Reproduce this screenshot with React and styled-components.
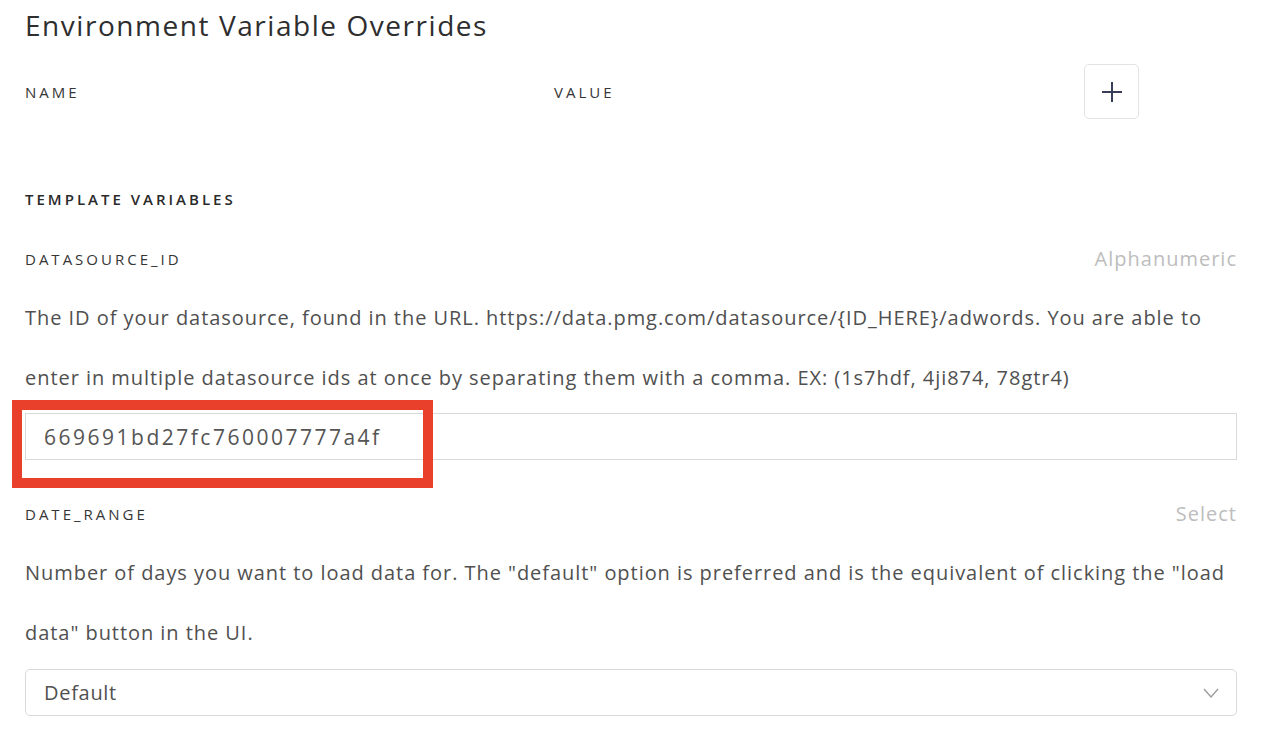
import React from "react";
import styled, { createGlobalStyle } from "styled-components";

const Global = createGlobalStyle`
  html, body { margin: 0; padding: 0; background: #fff; }
  body { font-family: "Open Sans", "Liberation Sans", sans-serif; color: #333; }
  * { box-sizing: border-box; }
`;

const Page = styled.div`
  width: 1264px;
  padding: 0 27px 0 25px;
  display: flex;
  flex-direction: column;
`;

const Title = styled.h1`
  margin: 0;
  font-size: 28px;
  font-weight: 400;
  line-height: 50px;
  color: #2e2e2e;
  letter-spacing: 1.55px;
`;

const HeaderRow = styled.div`
  margin-top: 14px;
  display: grid;
  grid-template-columns: 529px 530px 55px;
  align-items: center;
`;

const Label = styled.div`
  font-size: 15px;
  font-weight: ${(p) => (p.$strong ? 600 : 500)};
  letter-spacing: 3px;
  line-height: 30px;
  text-transform: uppercase;
  color: ${(p) => (p.$strong ? "#2a2a2a" : "#363636")};
  margin-top: ${(p) => p.$mt || 0}px;
`;

const AddButton = styled.button`
  width: 55px;
  height: 55px;
  border: 1px solid #e3e3e6;
  border-radius: 5px;
  background: #fff;
  display: flex;
  align-items: center;
  justify-content: center;
  padding: 0;
`;

const FieldHead = styled.div`
  margin-top: ${(p) => p.$mt}px;
  display: flex;
  justify-content: space-between;
  align-items: center;
  line-height: 30px;
`;

const TypeHint = styled.span`
  font-size: 20px;
  letter-spacing: 1px;
  color: #bdbdbd;
`;

const Description = styled.p`
  margin: 14px 0 0;
  font-size: 20px;
  letter-spacing: 0.95px;
  line-height: 60px;
  color: #505050;
`;

const InputWrap = styled.div`
  position: relative;
  margin-top: ${(p) => p.$mt}px;
`;

const TextInput = styled.div`
  height: 47px;
  border: 1px solid #d9d9d9;
  padding: 0 18px;
  display: flex;
  align-items: center;
  font-size: 21px;
  color: #555;
  letter-spacing: 2.5px;
`;

const Highlight = styled.div`
  position: absolute;
  left: -13px;
  top: -13px;
  width: 421px;
  height: 88px;
  border: 10px solid #e8402a;
  pointer-events: none;
`;

const SelectBox = styled.div`
  height: 47px;
  border: 1px solid #d9d9d9;
  border-radius: 5px;
  padding: 0 17px 0 18px;
  display: flex;
  align-items: center;
  justify-content: space-between;
  font-size: 20px;
  letter-spacing: 0.7px;
  color: #505050;
`;

const DATASOURCE_DESC =
  "The ID of your datasource, found in the URL. https://data.pmg.com/datasource/{ID_HERE}/adwords. You are able to enter in multiple datasource ids at once by separating them with a comma. EX: (1s7hdf, 4ji874, 78gtr4)";
const DATE_DESC =
  'Number of days you want to load data for. The "default" option is preferred and is the equivalent of clicking the "load data" button in the UI.';

export default function App() {
  return (
    <>
      <Global />
      <Page>
        <Title>Environment Variable Overrides</Title>
        <HeaderRow>
          <Label>Name</Label>
          <Label>Value</Label>
          <AddButton aria-label="Add">
            <svg width="20" height="20" viewBox="0 0 20 20">
              <path d="M10 0v20M0 10h20" stroke="#383d58" strokeWidth="2" fill="none" />
            </svg>
          </AddButton>
        </HeaderRow>

        <Label $strong $mt={65}>Template Variables</Label>

        <FieldHead $mt={30}>
          <Label>DATASOURCE_ID</Label>
          <TypeHint>Alphanumeric</TypeHint>
        </FieldHead>
        <Description>{DATASOURCE_DESC}</Description>
        <InputWrap $mt={5}>
          <TextInput>669691bd27fc760007777a4f</TextInput>
          <Highlight />
        </InputWrap>

        <FieldHead $mt={39}>
          <Label>DATE_RANGE</Label>
          <TypeHint>Select</TypeHint>
        </FieldHead>
        <Description>{DATE_DESC}</Description>
        <InputWrap $mt={6}>
          <SelectBox>
            <span>Default</span>
            <svg width="16" height="10" viewBox="0 0 16 10">
              <path d="M1 1l7 8 7-8" stroke="#9a9a9a" strokeWidth="1.3" fill="none" />
            </svg>
          </SelectBox>
        </InputWrap>
      </Page>
    </>
  );
}
